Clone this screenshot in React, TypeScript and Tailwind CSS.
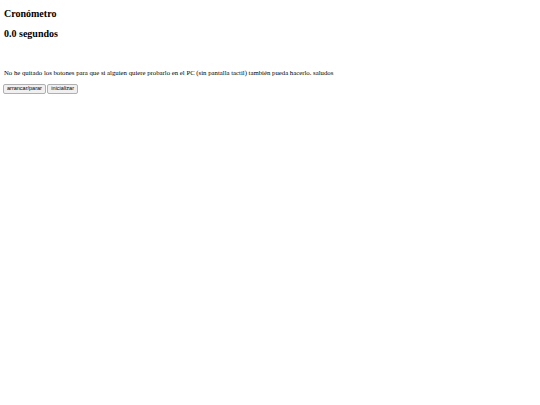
import React from 'react';

export default function App() {
  return (
    <div className="min-h-screen bg-white px-[4px] text-black">
      <div className="font-['Liberation_Serif',serif]">
        <h3 className="pt-[8px] text-[10px] font-bold leading-[12px]">Cronómetro</h3>
        <h3 className="mt-[8px] text-[10px] font-bold leading-[12px]">0.0 segundos</h3>
        <p className="mt-[29px] text-[6.75px] leading-[8px]">
          No he quitado los botones para que si alguien quiere probarlo en el PC (sin pantalla tactil) también pueda hacerlo. saludos
        </p>
        <div className="mt-[7px] flex gap-[1.5px] -ml-[1px]">
          <button className="h-[9.5px] rounded-[2px] border border-[#b0b0b0] bg-[#f0f0f0] px-[3px] font-['Liberation_Sans',sans-serif] text-[5.5px] leading-[7px]">
            arrancar/parar
          </button>
          <button className="h-[9.5px] rounded-[2px] border border-[#b0b0b0] bg-[#f0f0f0] px-[3px] font-['Liberation_Sans',sans-serif] text-[5.5px] leading-[7px]">
            inicializar
          </button>
        </div>
      </div>
    </div>
  );
}
